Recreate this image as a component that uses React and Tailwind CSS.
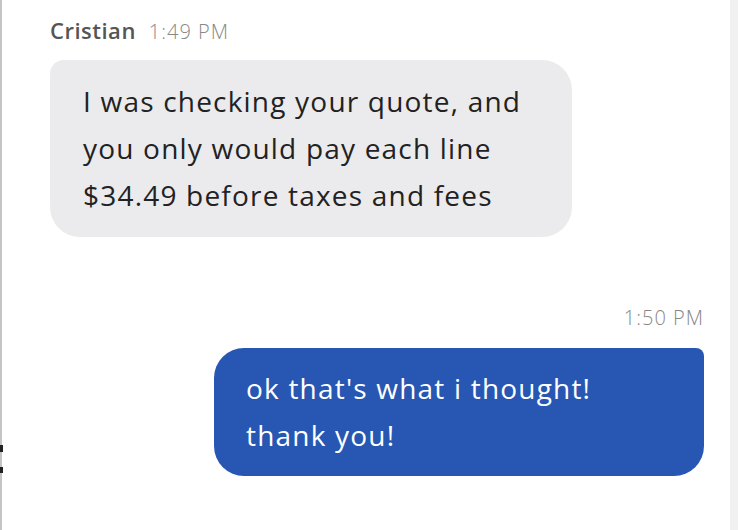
import React from 'react';

const Message = ({ side, children }) => {
  if (side === 'in') {
    return (
      <div className="w-[522px] rounded-[30px] rounded-tl-[14px] bg-[#ebebed] px-[33px] py-[18px] text-[28px] leading-[47px] tracking-[1.2px] text-[#222]">
        {children}
      </div>
    );
  }
  return (
    <div className="w-[490px] rounded-[30px] rounded-tr-[8px] bg-[#2757b3] px-[32px] py-[17px] text-[28px] leading-[47px] tracking-[1.2px] text-white">
      {children}
    </div>
  );
};

export default function App() {
  return (
    <div className="relative flex h-[530px] w-[738px] overflow-hidden bg-white font-['Open_Sans',sans-serif]">
      <div className="w-[2px] bg-[#c4c4c4]" />
      {/* little marks on the left edge */}
      <div className="absolute left-0 top-[445px] h-[7px] w-[3px] bg-[#222]" />
      <div className="absolute left-0 top-[467px] h-[6px] w-[3px] bg-[#222]" />

      <div className="flex flex-1 flex-col pl-[48px] pr-[26px] pt-[14px]">
        <div className="flex items-baseline gap-[13px]">
          <span className="text-[22px] font-semibold tracking-[0.5px] text-[#555]">Cristian</span>
          <span className="text-[20px] font-light tracking-[1px] text-[#888]">1:49 PM</span>
        </div>

        <div className="mt-[13px]">
          <Message side="in">
            I was checking your quote, and
            <br />
            you only would pay each line
            <br />
            $34.49 before taxes and fees
          </Message>
        </div>

        <div className="mt-[66px] flex flex-col items-end">
          <span className="text-[20px] font-light tracking-[1px] text-[#888]">1:50 PM</span>
          <div className="mt-[15px]">
            <Message side="out">
              ok that's what i thought!
              <br />
              thank you!
            </Message>
          </div>
        </div>
      </div>

      <div className="w-[8px] bg-[#f1f1f1]" />
    </div>
  );
}
